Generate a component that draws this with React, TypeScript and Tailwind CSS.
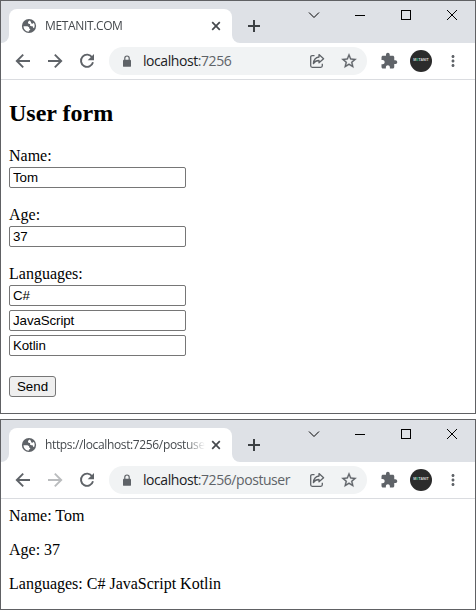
import React from 'react';
import { MdMoreVert } from 'react-icons/md';

const chromeFont = "font-['Open_Sans','Noto_Sans',sans-serif]";
const serif = "font-['Liberation_Serif',serif]";
const sans = "font-['Liberation_Sans',sans-serif]";

function GlobeIcon() {
  return (
    <svg className="shrink-0" width="16" height="16" viewBox="0 0 16 16">
      <circle cx="8" cy="8" r="7.1" fill="#5f6368" />
      <path
        d="M8.4 2.5L7 4v1.2l1.2.9h1l-.3 1.3 1.4.9h1.4l.3 1.1 1 .9c1-2 .9-4-.3-5.6-.7 1.2-2 1.1-2.5.5l-.3-1.4z"
        fill="#fff"
      />
      <path d="M2.5 8.2h4l1.6 1.1v1.2l1.2.5-.3 1.1-1.2.6v1C4.8 13.5 2.6 11.3 2.5 8.2z" fill="#fff" />
    </svg>
  );
}

function LockIcon() {
  return (
    <svg className="shrink-0" width="10" height="13" viewBox="0 0 10 13">
      <rect x="1" y="4.8" width="8" height="7" rx="0.9" fill="#5f6368" />
      <path d="M2.8 5.2V3.2a2.2 2.2 0 0 1 4.4 0v2" fill="none" stroke="#5f6368" strokeWidth="1.2" />
    </svg>
  );
}

function PuzzleIcon() {
  return (
    <svg className="ml-[13px] shrink-0" width="18" height="18" viewBox="0 0 24 24" fill="#5f6368">
      <path d="M20.5 11H19V7c0-1.1-.9-2-2-2h-4V3.5C13 2.12 11.88 1 10.5 1S8 2.12 8 3.5V5H4c-1.1 0-1.99.9-1.99 2v3.8H3.5c1.49 0 2.7 1.21 2.7 2.7s-1.21 2.7-2.7 2.7H2V20c0 1.1.9 2 2 2h3.8v-1.5c0-1.49 1.21-2.7 2.7-2.7s2.7 1.21 2.7 2.7V22H17c1.1 0 2-.9 2-2v-4h1.5c1.38 0 2.5-1.12 2.5-2.5S21.88 11 20.5 11z" />
    </svg>
  );
}

function ShareIcon() {
  return (
    <svg width="16" height="16" viewBox="0 0 16 16" fill="none" stroke="#5f6368" strokeWidth="1.3" strokeLinejoin="round">
      <path d="M5.5 2.6H3.2Q1.7 2.6 1.7 4.1v8.7q0 1.5 1.5 1.5h8.6q1.5 0 1.5-1.5v-2" />
      <path d="M10 1.6l4.6 4.1L10 9.8V7.5C7.2 7.5 5.6 8.5 4.4 10.6 4.7 6.8 6.7 4.4 10 4z" />
    </svg>
  );
}

function StarIcon() {
  return (
    <svg width="18" height="18" viewBox="0 0 24 24" fill="#5f6368" stroke="#5f6368" strokeWidth="0.4">
      <path d="M22 9.24l-7.19-.62L12 2 9.19 8.63 2 9.24l5.46 4.73L5.82 21 12 17.27 18.18 21l-1.63-7.03L22 9.24zM12 15.4l-3.76 2.27 1-4.28-3.32-2.88 4.38-.38L12 6.1l1.71 4.04 4.38.38-3.32 2.88 1 4.28L12 15.4z" />
    </svg>
  );
}

function BackIcon() {
  return (
    <svg className="shrink-0" width="16" height="16" viewBox="0 0 16 16" fill="none" stroke="currentColor" strokeWidth="1.9">
      <path d="M15 8H2.2M8.2 1.6L1.8 8l6.4 6.4" />
    </svg>
  );
}

function ForwardIcon({ className }: { className: string }) {
  return (
    <svg className={`shrink-0 ${className}`} width="16" height="16" viewBox="0 0 16 16" fill="none" stroke="currentColor" strokeWidth="1.9">
      <path d="M1 8h12.8M7.8 1.6L14.2 8l-6.4 6.4" />
    </svg>
  );
}

function ReloadIcon() {
  return (
    <svg className="shrink-0" width="16" height="16" viewBox="0 0 16 16">
      <path d="M13.2 4.4A6.1 6.1 0 1 0 14 9.3" fill="none" stroke="currentColor" strokeWidth="1.9" />
      <path d="M15 1v6.3H8.7z" fill="currentColor" />
    </svg>
  );
}

function WindowControls() {
  return (
    <div className="ml-auto mr-[17px] mt-[8px] flex h-3 gap-[34px] text-black">
      <svg width="12" height="12" viewBox="0 0 12 12" fill="none" stroke="currentColor">
        <path d="M1 3.5l5 5 5-5" />
      </svg>
      <svg width="12" height="12" viewBox="0 0 12 12" fill="none" stroke="currentColor">
        <path d="M1 6.5h10" />
      </svg>
      <svg width="12" height="12" viewBox="0 0 12 12" fill="none" stroke="currentColor">
        <rect x="1.5" y="1.5" width="9" height="9" />
      </svg>
      <svg width="12" height="12" viewBox="0 0 12 12" fill="none" stroke="currentColor">
        <path d="M1 1l10 10M11 1L1 11" />
      </svg>
    </div>
  );
}

function TabStrip({ title }: { title: string }) {
  return (
    <div className="flex h-[42px] bg-[#dee1e6]">
      <div className="flex w-2 items-end bg-white">
        <div className="h-full w-2 rounded-br-[8px] bg-[#dee1e6]" />
      </div>
      <div className="bg-[#dee1e6] pt-2">
        <div className="flex h-[34px] w-[223px] items-center rounded-t-[8px] bg-white pl-[12px]">
          <GlobeIcon />
          <div
            className={`ml-[8px] w-[160px] overflow-hidden whitespace-nowrap text-[12px] leading-4 tracking-[-0.36px] text-[#45494d] [mask-image:linear-gradient(to_right,black_140px,transparent_160px)] ${chromeFont}`}
          >
            {title}
          </div>
          <svg className="ml-[6px] shrink-0" width="10" height="10" viewBox="0 0 10 10" stroke="#45494d" strokeWidth="1.7">
            <path d="M1.2 1.2l7.6 7.6M8.8 1.2L1.2 8.8" />
          </svg>
        </div>
      </div>
      <div className="w-2 bg-white">
        <div className="h-full w-2 rounded-bl-[8px] bg-[#dee1e6]" />
      </div>
      <svg className="ml-[8px] mt-[19px]" width="12" height="12" viewBox="0 0 12 12" stroke="#3c4043" strokeWidth="2">
        <path d="M6 0v12M0 6h12" />
      </svg>
      <WindowControls />
    </div>
  );
}

function Toolbar({ path, canForward }: { path: string; canForward: boolean }) {
  return (
    <div className="flex h-[37px] items-center border-b border-[#dadce0] bg-white pl-[14px] text-[#5f6368]">
      <BackIcon />
      <ForwardIcon className={canForward ? 'ml-4' : 'ml-4 text-[#babcbe]'} />
      <div className="ml-4 flex">
        <ReloadIcon />
      </div>
      <div className="ml-[14px] flex h-7 w-[258px] items-center rounded-full bg-[#f1f3f4] pl-[13px]">
        <LockIcon />
        <div className={`ml-[11px] whitespace-nowrap text-[14px] leading-5 tracking-[-0.43px] ${chromeFont}`}>
          <span className="text-[#202124]">localhost</span>
          <span>{path}</span>
        </div>
        <div className="ml-auto mr-[9px] flex items-center gap-[15px]">
          <ShareIcon />
          <StarIcon />
        </div>
      </div>
      <PuzzleIcon />
      <div
        className={`ml-[12px] flex h-[22px] w-[22px] shrink-0 items-center justify-center rounded-full bg-[#2b2b2b] text-[3.5px] font-bold leading-none text-[#d5d5d5] ${sans}`}
      >
        M<span className="text-[#20b080]">E</span>TANIT
      </div>
      <MdMoreVert size={18} className="ml-[12px] shrink-0" />
    </div>
  );
}

function Field({ label, values }: { label: string; values: string[] }) {
  return (
    <div className="mb-[18px]">
      <div className="h-5 text-[16px] leading-[18px]">{label}</div>
      <div className="flex flex-col gap-1">
        {values.map((value) => (
          <input
            key={value}
            defaultValue={value}
            className={`block h-[21px] w-[177px] rounded-[2px] border border-[#767676] bg-white px-[3px] text-[13.333px] leading-[15px] tracking-[-0.1px] text-black ${sans}`}
          />
        ))}
      </div>
    </div>
  );
}

function BrowserWindow({
  title,
  path,
  canForward,
  className,
  children,
}: {
  title: string;
  path: string;
  canForward: boolean;
  className: string;
  children: React.ReactNode;
}) {
  return (
    <section className={`w-[476px] overflow-hidden border border-[#606164] bg-white ${className}`}>
      <TabStrip title={title} />
      <Toolbar path={path} canForward={canForward} />
      <main className={`px-2 text-black ${serif}`}>{children}</main>
    </section>
  );
}

export default function App() {
  return (
    <div className="flex h-[610px] w-[476px] flex-col gap-[5px] bg-white">
      <BrowserWindow title="METANIT.COM" path=":7256" canForward className="h-[414px]">
        <h2 className="mb-5 pt-5 text-[24px] font-bold leading-[27px]">User form</h2>
        <Field label="Name:" values={['Tom']} />
        <Field label="Age:" values={['37']} />
        <Field label="Languages:" values={['C#', 'JavaScript', 'Kotlin']} />
        <div className="pt-[2px]">
          <button
            className={`block h-[21px] w-[47px] rounded-[3px] border border-[#767676] bg-[#efefef] text-[13.333px] leading-[19px] ${sans}`}
          >
            Send
          </button>
        </div>
      </BrowserWindow>
      <BrowserWindow title="https://localhost:7256/postuser" path=":7256/postuser" canForward={false} className="h-[191px]">
        <div className="flex flex-col gap-4 pt-2 text-[16px] leading-[18px]">
          <p>Name: Tom</p>
          <p>Age: 37</p>
          <p>Languages: C# JavaScript Kotlin</p>
        </div>
      </BrowserWindow>
    </div>
  );
}
